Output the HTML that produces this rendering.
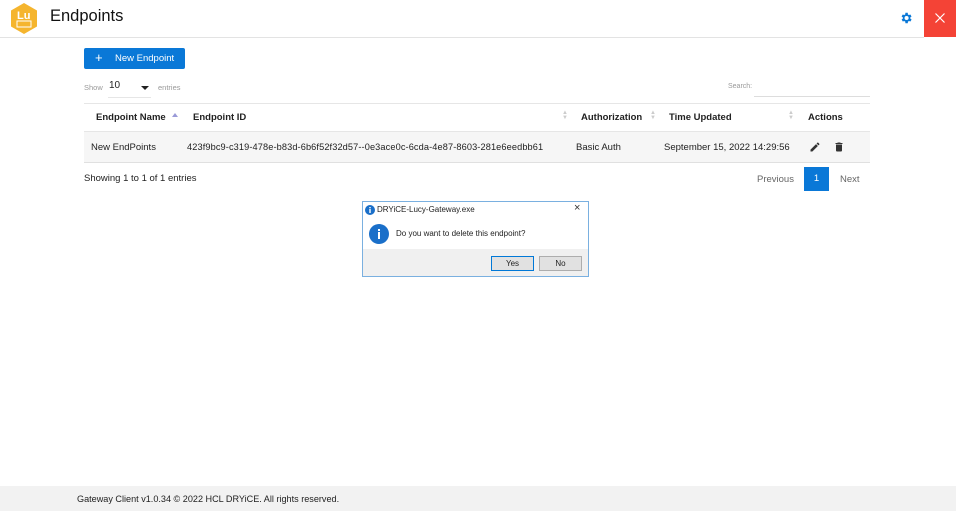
<!DOCTYPE html><html><head><style>
*{margin:0;padding:0;box-sizing:border-box}
body{width:956px;height:511px;position:relative;background:#fff;font-family:"Liberation Sans",sans-serif;color:#222;overflow:hidden}
.a{position:absolute;white-space:nowrap}
</style></head><body>
<div class="a" style="left:0;top:37px;width:924px;height:1px;background:#e3e3e3"></div>
<svg class="a" style="left:9px;top:3px" width="30" height="31" viewBox="0 0 30 31"><polygon points="15,0 28,7.5 28,23.5 15,31 2,23.5 2,7.5" fill="#f5b52e"/><text x="8" y="16" font-size="11" font-weight="bold" fill="#fff" font-family="Liberation Sans">Lu</text><rect x="8" y="18" width="14" height="6" fill="none" stroke="#fff" stroke-width="1"/></svg>
<div class="a" style="left:50px;top:7px;font-size:16.5px;color:#111">Endpoints</div>
<svg class="a" style="left:899px;top:11px" width="14" height="14" viewBox="0 0 24 24"><path fill="#0a78d7" d="M19.4 13a7.5 7.5 0 000-2l2.1-1.6-2-3.5-2.5 1a7 7 0 00-1.7-1L15 3h-4l-.4 2.9a7 7 0 00-1.7 1l-2.5-1-2 3.5L6.6 11a7.5 7.5 0 000 2l-2.1 1.6 2 3.5 2.5-1a7 7 0 001.7 1L11 21h4l.4-2.9a7 7 0 001.7-1l2.5 1 2-3.5zM13 15.5a3.5 3.5 0 110-7 3.5 3.5 0 010 7z"/></svg>
<div class="a" style="left:924px;top:0;width:32px;height:37px;background:#f44336"></div>
<svg class="a" style="left:935px;top:13px" width="10" height="10"><path d="M0.5 0.5L9.5 9.5M9.5 0.5L0.5 9.5" stroke="#fff" stroke-width="1.2"/></svg>
<div class="a" style="left:84px;top:48px;width:101px;height:21px;background:#0a78d7;border-radius:2px;color:#fff;font-size:9.5px;line-height:21px"><span style="position:absolute;left:11px;font-size:13px;top:-1px">+</span><span style="position:absolute;left:31px">New Endpoint</span></div>
<div class="a" style="left:84px;top:83px;font-size:7.5px;color:#999">Show</div>
<div class="a" style="left:109px;top:80px;font-size:10px">10</div>
<svg class="a" style="left:141px;top:86px" width="8" height="5"><path d="M0 0H8L4 4z" fill="#222"/></svg>
<div class="a" style="left:108px;top:97px;width:43px;height:1px;background:#e6e6e6"></div>
<div class="a" style="left:158px;top:83px;font-size:7.5px;color:#999">entries</div>
<div class="a" style="left:728px;top:83px;font-size:7px;color:#999">Search:</div>
<div class="a" style="left:754px;top:96px;width:116px;height:1px;background:#ddd"></div>
<div class="a" style="left:84px;top:103px;width:786px;height:1px;background:#e6e6e6"></div>
<div class="a" style="left:84px;top:131px;width:786px;height:32px;background:#f6f6f6;border-top:1px solid #e6e6e6;border-bottom:1px solid #e0e0e0"></div>
<div class="a" style="left:96px;top:112px;font-size:9.5px;font-weight:bold">Endpoint Name</div>
<svg class="a" style="left:172px;top:113px" width="6" height="5"><path d="M0 4H6L3 0z" fill="#9a9ad8"/></svg>
<div class="a" style="left:193px;top:112px;font-size:9.5px;font-weight:bold">Endpoint ID</div>
<div class="a" style="left:581px;top:112px;font-size:9.5px;font-weight:bold">Authorization</div>
<div class="a" style="left:669px;top:112px;font-size:9.5px;font-weight:bold">Time Updated</div>
<div class="a" style="left:808px;top:112px;font-size:9.5px;font-weight:bold">Actions</div>
<div class="a" style="left:562px;top:111px;font-size:6px;color:#ccc;line-height:5px">▲<br>▼</div>
<div class="a" style="left:650px;top:111px;font-size:6px;color:#ccc;line-height:5px">▲<br>▼</div>
<div class="a" style="left:788px;top:111px;font-size:6px;color:#ccc;line-height:5px">▲<br>▼</div>
<div class="a" style="left:91px;top:142px;font-size:9.5px">New EndPoints</div>
<div class="a" style="left:187px;top:142px;font-size:9.2px;letter-spacing:0.12px">423f9bc9-c319-478e-b83d-6b6f52f32d57--0e3ace0c-6cda-4e87-8603-281e6eedbb61</div>
<div class="a" style="left:576px;top:142px;font-size:9.5px">Basic Auth</div>
<div class="a" style="left:664px;top:142px;font-size:9.5px">September 15, 2022 14:29:56</div>
<svg class="a" style="left:809px;top:141px" width="12" height="12" viewBox="0 0 24 24"><path fill="#333" d="M3 17.25V21h3.75L17.8 9.94l-3.75-3.75zM20.7 7.04a1 1 0 000-1.41l-2.34-2.34a1 1 0 00-1.41 0l-1.83 1.83 3.75 3.75z"/></svg>
<svg class="a" style="left:833px;top:141px" width="12" height="12" viewBox="0 0 24 24"><path fill="#333" d="M6 19a2 2 0 002 2h8a2 2 0 002-2V7H6zM19 4h-3.5l-1-1h-5l-1 1H5v2h14z"/></svg>
<div class="a" style="left:84px;top:173px;font-size:9.5px">Showing 1 to 1 of 1 entries</div>
<div class="a" style="left:757px;top:174px;font-size:9.5px;color:#666">Previous</div>
<div class="a" style="left:804px;top:167px;width:25px;height:24px;background:#0a78d7;color:#fff;font-size:9.5px;text-align:center;line-height:24px">1</div>
<div class="a" style="left:840px;top:174px;font-size:9.5px;color:#666">Next</div>
<div class="a" style="left:362px;top:201px;width:227px;height:76px;border:1px solid #7ab0e0;background:#fff">
<div class="a" style="left:0;top:47px;width:225px;height:27px;background:#f0f0f0"></div>
<svg class="a" style="left:2px;top:3px" width="10" height="10"><circle cx="5" cy="5" r="5" fill="#1a6fc9"/><rect x="4.3" y="4" width="1.4" height="4" fill="#fff"/><rect x="4.3" y="2" width="1.4" height="1.3" fill="#fff"/></svg>
<div class="a" style="left:14px;top:3px;font-size:8px">DRYiCE-Lucy-Gateway.exe</div>
<div class="a" style="left:211px;top:0px;font-size:11px;color:#333">×</div>
<svg class="a" style="left:6px;top:22px" width="20" height="20"><circle cx="10" cy="10" r="10" fill="#1a6fc9"/><rect x="9" y="8" width="2" height="7" fill="#fff"/><rect x="9" y="5" width="2" height="2" fill="#fff"/></svg>
<div class="a" style="left:33px;top:27px;font-size:8px">Do you want to delete this endpoint?</div>
<div class="a" style="left:128px;top:54px;width:43px;height:15px;background:#e1e1e1;border:1px solid #0078d7;font-size:8px;text-align:center;line-height:13px">Yes</div>
<div class="a" style="left:176px;top:54px;width:43px;height:15px;background:#e1e1e1;border:1px solid #adadad;font-size:8px;text-align:center;line-height:13px">No</div>
</div>
<div class="a" style="left:0;top:486px;width:956px;height:25px;background:#f2f2f2"></div>
<div class="a" style="left:77px;top:494px;font-size:9.1px">Gateway Client v1.0.34 © 2022 HCL DRYiCE. All rights reserved.</div>
</body></html>
